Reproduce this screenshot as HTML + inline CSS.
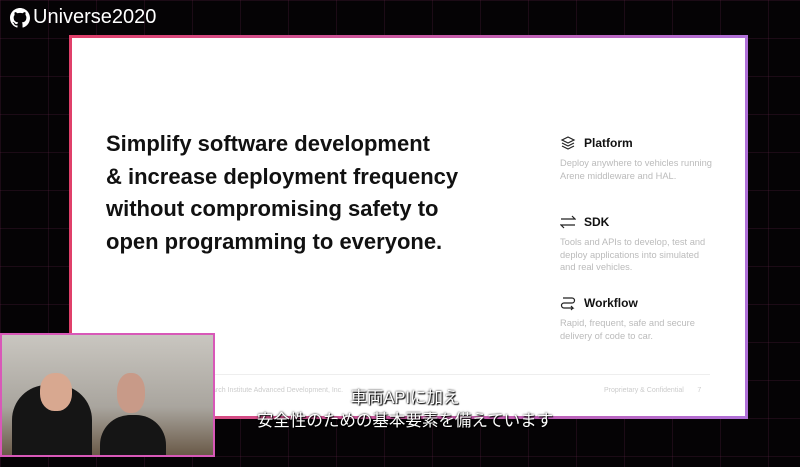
<!DOCTYPE html>
<html><head><meta charset="utf-8"><style>
body{margin:0;width:800px;height:467px;background:#050305;position:relative;overflow:hidden;font-family:"Liberation Sans",sans-serif}
.grid{position:absolute;inset:0;background-image:linear-gradient(rgba(110,40,80,.22) 1px,transparent 1px),linear-gradient(90deg,rgba(110,40,80,.22) 1px,transparent 1px);background-size:48px 38px}
.logo{position:absolute;left:10px;top:6px;color:#fff;font-size:20px;display:flex;align-items:center}
.slide{position:absolute;left:69px;top:35px;width:673px;height:378px;background:#fff;border:3px solid;border-image:linear-gradient(90deg,#e0406a,#b070d8) 1}
.main{position:absolute;left:34px;top:90px;font-size:22px;font-weight:bold;line-height:32.5px;color:#111}
.item{position:absolute;left:488px;font-size:9.3px;color:#bbb;line-height:12.5px}
.item b{display:flex;align-items:center;gap:8px;color:#111;font-size:12px;margin-bottom:6px}
.foot{position:absolute;top:349px;font-size:7px;color:#ccc}
.cam{position:absolute;left:0;top:333px;width:211px;height:120px;border:2px solid #d858b8;background:linear-gradient(#c9c6c0,#a9a59e 60%,#6a5a48)}
.sub{position:absolute;left:5px;width:800px;text-align:center;color:#fff;font-family:"Liberation Sans","Noto Sans CJK JP",sans-serif;font-size:16.5px;text-shadow:0 0 2px #000,1px 1px 1px #000}
</style></head><body>
<div class="grid"></div>
<div class="logo"><svg width="20" height="20" viewBox="0 0 16 16"><path fill="#fff" d="M8 0C3.58 0 0 3.58 0 8c0 3.540 2.290 6.530 5.470 7.590.4.07.55-.17.55-.38v-1.33c-2.23.48-2.7-1.07-2.7-1.07-.36-.92-.89-1.170-.89-1.170-.73-.5.06-.49.06-.49.8.06 1.23.83 1.23.83.72 1.22 1.87.87 2.33.66.07-.52.28-.87.51-1.07-1.78-.2-3.64-.89-3.64-3.95 0-.87.31-1.59.82-2.150-.08-.2-.36-1.02.08-2.12 0 0 .67-.21 2.2.82a7.6 7.6 0 0 1 4 0c1.53-1.04 2.2-.82 2.2-.82.44 1.1.16 1.92.08 2.12.51.56.82 1.27.82 2.15 0 3.07-1.87 3.75-3.65 3.95.29.25.54.73.54 1.48v2.2c0 .21.15.46.55.38A8 8 0 0 0 16 8c0-4.42-3.58-8-8-8z"/></svg><span style="margin-left:3px">Universe</span><span style="font-weight:300">2020</span></div>
<div class="slide">
<div class="main">Simplify software development<br>&amp; increase deployment frequency<br>without compromising safety to<br>open programming to everyone.</div>
<div class="item" style="top:97px"><b><svg width="16" height="16" viewBox="0 0 16 16" fill="none" stroke="#222" stroke-width="1.2"><path d="M8 2L14 5 8 8 2 5z M2 8l6 3 6-3 M2 11l6 3 6-3"/></svg>Platform</b>Deploy anywhere to vehicles running<br>Arene middleware and HAL.</div>
<div class="item" style="top:176px"><b><svg width="16" height="16" viewBox="0 0 16 16" fill="none" stroke="#222" stroke-width="1.2"><path d="M1 5h14l-3-3 M15 11H1l3 3"/></svg>SDK</b>Tools and APIs to develop, test and<br>deploy applications into simulated<br>and real vehicles.</div>
<div class="item" style="top:257px"><b><svg width="16" height="16" viewBox="0 0 16 16" fill="none" stroke="#222" stroke-width="1.2"><path d="M3 3h9a2.5 2.5 0 0 1 0 5H4a2.5 2.5 0 0 0 0 5h9l-2-2 M13 13l-2 2"/></svg>Workflow</b>Rapid, frequent, safe and secure<br>delivery of code to car.</div>
<div style="position:absolute;left:140px;right:35px;top:336px;border-top:1px solid #eee"></div>
<div class="foot" style="left:140px">arch Institute Advanced Development, Inc.</div>
<div class="foot" style="left:532px">Proprietary &amp; Confidential &nbsp;&nbsp;&nbsp;&nbsp;&nbsp; 7</div>
</div>
<div class="cam">
<div style="position:absolute;left:10px;top:50px;width:80px;height:70px;background:#151515;border-radius:35px 35px 0 0"></div>
<div style="position:absolute;left:38px;top:38px;width:32px;height:38px;background:#d8a890;border-radius:45%"></div>
<div style="position:absolute;left:98px;top:80px;width:66px;height:40px;background:#151515;border-radius:30px 30px 0 0"></div>
<div style="position:absolute;left:115px;top:38px;width:28px;height:40px;background:#c89a88;border-radius:45%"></div>
</div>
<div class="sub" style="top:384px">車両APIに加え</div>
<div class="sub" style="top:407px">安全性のための基本要素を備えています</div>
</body></html>
